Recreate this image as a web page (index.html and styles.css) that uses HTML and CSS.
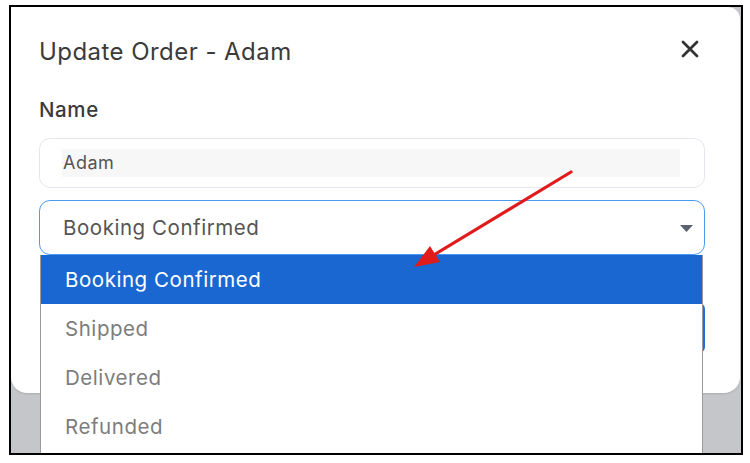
FILE: index.html
```html
<!DOCTYPE html>
<html>
<head>
<meta charset="utf-8">
<link rel="stylesheet" href="styles.css">
</head>
<body>
<div class="frame">
  <div class="modal">
    <div class="modal-header">
      <h2 class="modal-title">Update Order - Adam</h2>
      <button class="close-btn" aria-label="Close">
        <svg width="18" height="18" viewBox="0 0 18 18"><path d="M2 2L16 16M16 2L2 16" stroke="#333" stroke-width="2.8" stroke-linecap="round"/></svg>
      </button>
    </div>
    <label class="field-label">Name</label>
    <div class="input-box">
      <div class="input-fill">Adam</div>
    </div>
    <div class="select-wrap">
      <div class="select-box">
        <span>Booking Confirmed</span>
        <svg class="caret" width="13" height="7" viewBox="0 0 13 7"><path d="M0 0H13L6.5 7Z" fill="#5b6372"/></svg>
      </div>
      <div class="update-btn"></div>
      <ul class="dropdown">
        <li class="option active">Booking Confirmed</li>
        <li class="option">Shipped</li>
        <li class="option">Delivered</li>
        <li class="option">Refunded</li>
      </ul>
    </div>
  </div>
  <svg class="annot" width="730" height="446" viewBox="11 7 730 446">
    <line x1="571" y1="172" x2="432" y2="256" stroke="#e11b1b" stroke-width="3.2" stroke-linecap="round"/>
    <polygon points="414,267 440,262 430,246" fill="#e11b1b"/>
  </svg>
</div>
</body>
</html>
```

FILE: styles.css
```css
* { box-sizing: border-box; }
html, body { margin: 0; padding: 0; background: #fff; }
body {
  font-family: Inter, "Open Sans", "Liberation Sans", sans-serif;
  width: 750px;
  height: 463px;
  padding: 5px 0 0 9px;
}
.frame {
  position: relative;
  width: 734px;
  height: 450px;
  border: 2px solid #000;
  background: #c5c6c9;
  overflow: hidden;
}
.modal {
  background: #fff;
  width: 729px;
  height: 386px;
  border-radius: 0 12px 16px 16px;
  padding: 30px 35px 0 28px;
  box-shadow: 0 1px 2px rgba(0,0,0,0.12);
}
.modal-header {
  display: flex;
  justify-content: space-between;
  align-items: center;
  height: 30px;
}
.modal-title {
  margin: 0;
  font-size: 24px;
  line-height: 30px;
  font-weight: 400;
  color: #3b3b3b;
  letter-spacing: 0.45px;
}
.close-btn {
  border: 0;
  background: none;
  padding: 0;
  margin-top: -6px;
  margin-right: 6px;
  width: 18px;
  height: 18px;
  display: flex;
}
.field-label {
  display: block;
  margin-top: 31px;
  font-size: 20.5px;
  line-height: 24px;
  font-weight: 500;
  letter-spacing: 0.6px;
  color: #3b3b3b;
}
.input-box {
  margin-top: 16px;
  height: 50px;
  border: 1px solid #e4e8ee;
  border-radius: 11px;
  padding: 10px 24px 10px 22px;
}
.input-fill {
  height: 28px;
  background: #f7f7f8;
  font-size: 18px;
  letter-spacing: 0.5px;
  color: #555;
  line-height: 28px;
  padding-left: 1px;
}
.select-wrap {
  position: relative;
  margin-top: 12px;
}
.select-box {
  height: 55px;
  border: 1.5px solid #4d9af3;
  border-radius: 11px;
  display: flex;
  align-items: center;
  justify-content: space-between;
  padding: 0 11px 0 23px;
  font-size: 20.5px;
  letter-spacing: 0.55px;
  color: #555;
}
.caret { margin-top: 2px; }
.update-btn {
  margin-top: 48px;
  margin-left: 3px;
  height: 50px;
  background: #1f6fd6;
  border-radius: 6px;
}
.dropdown {
  position: absolute;
  left: 1px;
  top: 55px;
  width: 663px;
  margin: 0;
  padding: 0 0 20px;
  list-style: none;
  background: #fff;
  border: 1px solid #9a9a9a;
  border-top: 0;
}
.option {
  height: 49px;
  display: flex;
  align-items: center;
  padding-left: 24px;
  font-size: 20.5px;
  letter-spacing: 0.55px;
  color: #7d7d7d;
}
.option.active {
  background: #1a67d2;
  color: #fff;
}
.annot {
  position: absolute;
  left: 0;
  top: 0;
  pointer-events: none;
}
```
